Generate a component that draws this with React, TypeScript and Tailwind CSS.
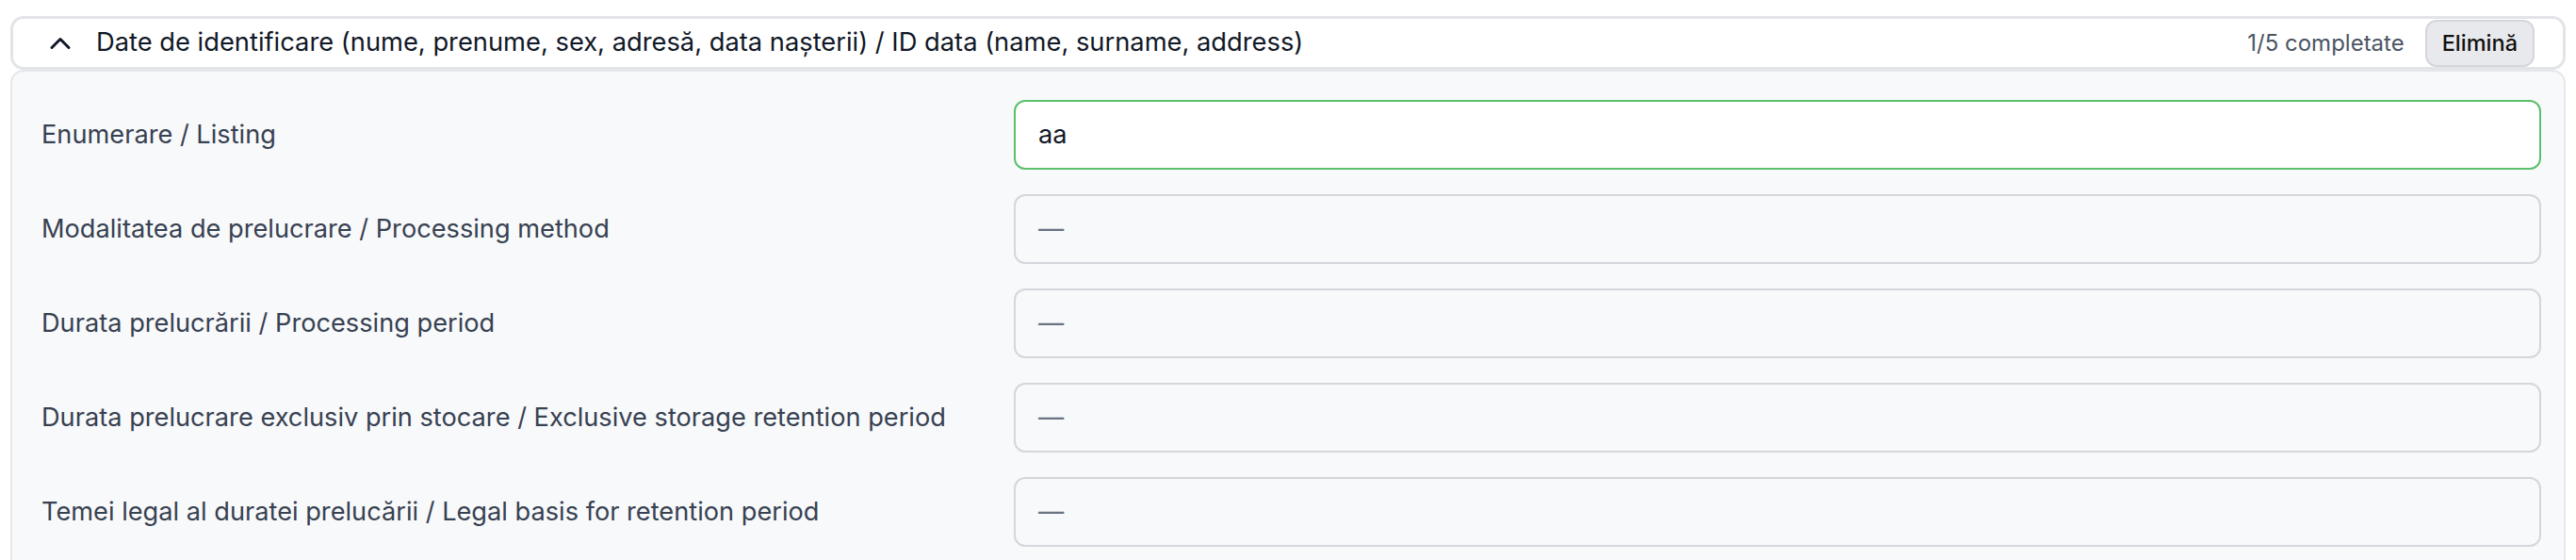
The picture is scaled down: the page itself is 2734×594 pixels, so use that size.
import { ChevronUp } from 'lucide-react'

const fields = [
  { label: 'Enumerare / Listing', value: 'aa' },
  { label: 'Modalitatea de prelucrare / Processing method', value: '' },
  { label: 'Durata prelucrării / Processing period', value: '' },
  { label: 'Durata prelucrare exclusiv prin stocare / Exclusive storage retention period', value: '' },
  { label: 'Temei legal al duratei prelucării / Legal basis for retention period', value: '' },
]

export default function App() {
  return (
    <div className="min-h-screen bg-white px-[11px] pt-[17px]" style={{ fontFamily: 'Inter, "Noto Sans", sans-serif' }}>
      {/* section header */}
      <div className="flex h-[57px] items-center rounded-[14px] border-[3px] border-[#e3e4e8] bg-white pl-[32px] pr-[30px]">
        <ChevronUp size={36} strokeWidth={2} className="shrink-0 text-[#111827]" />
        <span className="ml-[20px] flex-1 truncate text-[27.3px] text-[#111827]">
          Date de identificare (nume, prenume, sex, adresă, data nașterii) / ID data (name, surname, address)
        </span>
        <span className="text-[24px] text-[#4b5563]">1/5 completate</span>
        <button className="ml-[22px] h-[50px] rounded-[12px] border-2 border-[#d4d6dc] bg-[#e8e9ed] px-[16px] text-[23.5px] font-medium text-[#111]">
          Elimină
        </button>
      </div>

      {/* fields */}
      <div className="flex flex-col gap-[26px] rounded-t-[14px] border-2 border-[#e5e7eb] bg-[#f8f9fb] pl-[31px] pr-[24px] pt-[30px] pb-[20px]">
        {fields.map((f) => (
          <div key={f.label} className="grid grid-cols-[1008px_1fr] items-center gap-[24px]">
            <span className="text-[27.2px] text-[#374151]">{f.label}</span>
            {f.value ? (
              <div className="flex h-[74px] items-center rounded-[12px] border-2 border-[#5cbf6c] bg-white px-[24px] text-[27.2px] text-[#111827]">
                {f.value}
              </div>
            ) : (
              <div className="flex h-[74px] items-center rounded-[12px] border-2 border-[#d4d6dc] bg-[#f8f9fb] px-[24px] text-[27.2px] text-[#6b7280]">
                —
              </div>
            )}
          </div>
        ))}
      </div>
    </div>
  )
}
